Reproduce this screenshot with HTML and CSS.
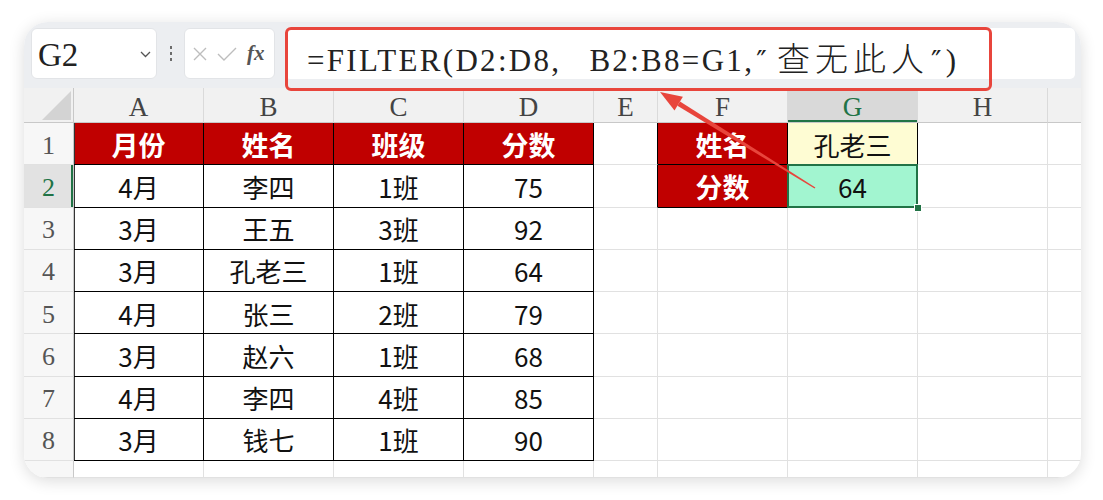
FILE: index.html
```html
<!DOCTYPE html>
<html lang="zh">
<head>
<meta charset="utf-8">
<title>FILTER</title>
<link rel="stylesheet" href="styles.css">
</head>
<body>
<div class="page">
  <div class="card">
    <div class="fbar">
      <div class="namebox">
        <span class="nb-text">G2</span>
        <svg class="chev" width="11" height="7" viewBox="0 0 11 7"><path d="M1 1 L5.5 5.5 L10 1" fill="none" stroke="#555" stroke-width="1.3"/></svg>
      </div>
      <div class="dots"><i></i><i></i><i></i></div>
      <div class="fnbox">
        <svg width="16" height="16" viewBox="0 0 16 16"><path d="M2 2 L14 14 M14 2 L2 14" stroke="#bdbdbd" stroke-width="1.4" fill="none"/></svg>
        <svg width="20" height="16" viewBox="0 0 20 16"><path d="M1 8 L7 14 L19 2" stroke="#bdbdbd" stroke-width="1.4" fill="none"/></svg>
        <span class="fx">fx</span>
      </div>
      <div class="finput"><span class="ftext">=FILTER(D2:D8, B2:B8=G1,<span class="q">″</span><span class="cjk">查无此人</span><span class="q">″</span>)</span></div>
    </div>
    <div class="grid">
      <div class="c corner"><i class="tri"></i></div>
      <div class="c ch">A</div><div class="c ch">B</div><div class="c ch">C</div><div class="c ch">D</div><div class="c ch">E</div><div class="c ch">F</div><div class="c ch sel">G</div><div class="c ch">H</div><div class="c ch last"></div>

      <div class="c rh">1</div>
      <div class="c hd tl">月份</div><div class="c hd">姓名</div><div class="c hd">班级</div><div class="c hd">分数</div>
      <div class="c bk"></div><div class="c hd">姓名</div><div class="c g1">孔老三</div><div class="c"></div><div class="c last"></div>

      <div class="c rh sel">2</div>
      <div class="c t tl">4月</div><div class="c t">李四</div><div class="c t">1班</div><div class="c t">75</div>
      <div class="c bk"></div><div class="c hd">分数</div><div class="c g2">64</div><div class="c"></div><div class="c last"></div>

      <div class="c rh">3</div>
      <div class="c t tl">3月</div><div class="c t">王五</div><div class="c t">3班</div><div class="c t">92</div>
      <div class="c"></div><div class="c"></div><div class="c"></div><div class="c"></div><div class="c last"></div>

      <div class="c rh">4</div>
      <div class="c t tl">3月</div><div class="c t">孔老三</div><div class="c t">1班</div><div class="c t">64</div>
      <div class="c"></div><div class="c"></div><div class="c"></div><div class="c"></div><div class="c last"></div>

      <div class="c rh">5</div>
      <div class="c t tl">4月</div><div class="c t">张三</div><div class="c t">2班</div><div class="c t">79</div>
      <div class="c"></div><div class="c"></div><div class="c"></div><div class="c"></div><div class="c last"></div>

      <div class="c rh">6</div>
      <div class="c t tl">3月</div><div class="c t">赵六</div><div class="c t">1班</div><div class="c t">68</div>
      <div class="c"></div><div class="c"></div><div class="c"></div><div class="c"></div><div class="c last"></div>

      <div class="c rh">7</div>
      <div class="c t tl">4月</div><div class="c t">李四</div><div class="c t">4班</div><div class="c t">85</div>
      <div class="c"></div><div class="c"></div><div class="c"></div><div class="c"></div><div class="c last"></div>

      <div class="c rh">8</div>
      <div class="c t tl">3月</div><div class="c t">钱七</div><div class="c t">1班</div><div class="c t">90</div>
      <div class="c"></div><div class="c"></div><div class="c"></div><div class="c"></div><div class="c last"></div>

      <div class="c rh r9">9</div>
      <div class="c"></div><div class="c"></div><div class="c"></div><div class="c"></div>
      <div class="c"></div><div class="c"></div><div class="c"></div><div class="c"></div><div class="c last"></div>
    </div>
  </div>
  <div class="redbox"></div>
  <svg class="arrow" width="1103" height="500" viewBox="0 0 1103 500">
    <polygon points="677.4,105.7 680,101.5 815.4,187.4 814.6,188.6" fill="#e8453c"/>
    <polygon points="660,92 674.5,110.4 682.9,96.8" fill="#e8453c"/>
  </svg>
</div>
</body>
</html>
```

FILE: styles.css
```css
html, body {
  margin: 0;
  padding: 0;
  background: #ffffff;
}
body {
  font-family: "Noto Sans CJK SC", "Noto Sans", sans-serif;
}
.page {
  position: relative;
  width: 1103px;
  height: 500px;
  overflow: hidden;
  padding: 22px 0 0 24px;
  box-sizing: border-box;
}
.card {
  width: 1057px;
  height: 456px;
  border-radius: 24px;
  overflow: hidden;
  background: #fff;
  box-shadow: 0 3px 16px rgba(0, 0, 0, 0.14);
}
.fbar {
  height: 66px;
  background: #eceef1;
  display: flex;
  align-items: flex-start;
  padding: 6px 6px 0 7px;
  box-sizing: border-box;
}
.namebox {
  width: 126px;
  height: 51px;
  background: #fff;
  border-radius: 6px;
  border: 1px solid #e2e4e7;
  box-sizing: border-box;
  display: flex;
  align-items: center;
  justify-content: space-between;
  padding: 0 5px 0 6px;
}
.nb-text {
  font-family: "Liberation Serif", serif;
  font-size: 33px;
  color: #222;
  padding-top: 3px;
}
.chev {
  margin-top: 2px;
}
.dots {
  width: 27px;
  height: 51px;
  display: flex;
  flex-direction: column;
  align-items: center;
  justify-content: center;
  gap: 3px;
}
.dots i {
  width: 2px;
  height: 3px;
  background: #6c6c6c;
  display: block;
}
.fnbox {
  width: 91px;
  height: 51px;
  background: #fff;
  border-radius: 6px;
  border: 1px solid #e2e4e7;
  box-sizing: border-box;
  display: flex;
  align-items: center;
  padding-left: 7px;
  gap: 9px;
}
.fx {
  font-family: "Liberation Serif", serif;
  font-style: italic;
  font-weight: 700;
  font-size: 21px;
  color: #555;
  margin-left: 1px;
}
.finput {
  flex: 1;
  height: 51px;
  margin-left: 10px;
  background: #fff;
  border-radius: 5px;
  display: flex;
  align-items: center;
  padding-left: 22px;
  box-sizing: border-box;
  white-space: pre;
}
.ftext {
  font-family: "Liberation Serif", serif;
  font-size: 31px;
  letter-spacing: 2.3px;
  word-spacing: 18px;
  color: #222;
  padding-top: 7px;
}
.q {
  font-family: "DejaVu Serif", serif;
  font-size: 28px;
  margin: 0 2px;
}
.cjk {
  font-family: "Noto Sans CJK SC", sans-serif;
  font-weight: 300;
  font-size: 33px;
  letter-spacing: 5px;
  margin-left: 6px;
}
.grid {
  display: grid;
  grid-template-columns: 50px 130px 130px 130px 130px 64px 130px 130px 130px 1fr;
  grid-template-rows: 35px repeat(8, 42.25px) 1fr;
  height: 390px;
}
.c {
  box-sizing: border-box;
  border-right: 1px solid #e1e1e1;
  border-bottom: 1px solid #e1e1e1;
  display: flex;
  align-items: center;
  justify-content: center;
  font-size: 26px;
  line-height: 1;
  color: #111;
  padding-top: 2px;
  overflow: visible;
}
.c.last {
  border-right: none;
}
.ch {
  background: #f1f1f1;
  border-right-color: #dadada;
  border-bottom-color: #c8c8c8;
  font-family: "Liberation Serif", serif;
  font-size: 27px;
  color: #444;
  padding-top: 4px;
}
.ch.sel {
  background: #d9d9d9;
  color: #217346;
  box-shadow: inset 0 -2px 0 #217346;
}
.corner {
  background: #f1f1f1;
  border-bottom-color: #c8c8c8;
  border-right-color: #c8c8c8;
  align-items: flex-end;
  justify-content: flex-end;
  padding: 0 2px 2px 0;
}
.tri {
  display: block;
  width: 29px;
  height: 29px;
  background: #d3d3d3;
  clip-path: polygon(100% 0, 100% 100%, 0 100%);
}
.rh {
  background: #f7f7f7;
  border-right-color: #c8c8c8;
  font-family: "Liberation Serif", serif;
  font-size: 26px;
  color: #555;
  padding-top: 4px;
}
.rh.sel {
  background: #e2e2e2;
  color: #217346;
  box-shadow: inset -2px 0 0 #217346;
}
.rh.r9 {
  align-items: flex-start;
  padding-top: 13px;
  overflow: hidden;
}
.t {
  border-right-color: #000;
  border-bottom-color: #000;
}
.tl {
  box-shadow: inset 1px 0 0 #333;
}
.hd {
  background: #c00000;
  color: #fff;
  font-weight: 700;
  font-size: 27px;
  border-right-color: #000;
  border-bottom-color: #000;
}
.bk {
  border-right-color: #000;
}
.g1 {
  background: #fefcd3;
  border-right-color: #000;
  border-bottom-color: #217346;
}
.g2 {
  position: relative;
  background: #a2f5d0;
}
.g2::after {
  content: "";
  position: absolute;
  left: -1px;
  top: -1px;
  right: -1px;
  bottom: -1px;
  border: 2px solid #217346;
}
.g2::before {
  content: "";
  position: absolute;
  right: -5px;
  bottom: -5px;
  width: 6px;
  height: 6px;
  background: #217346;
  border: 1px solid #fff;
  z-index: 2;
}
.redbox {
  position: absolute;
  left: 285px;
  top: 27px;
  width: 707px;
  height: 64px;
  border: 3px solid #e8453c;
  border-radius: 6px;
  box-sizing: border-box;
  pointer-events: none;
}
.arrow {
  position: absolute;
  left: 0;
  top: 0;
  pointer-events: none;
}
```
